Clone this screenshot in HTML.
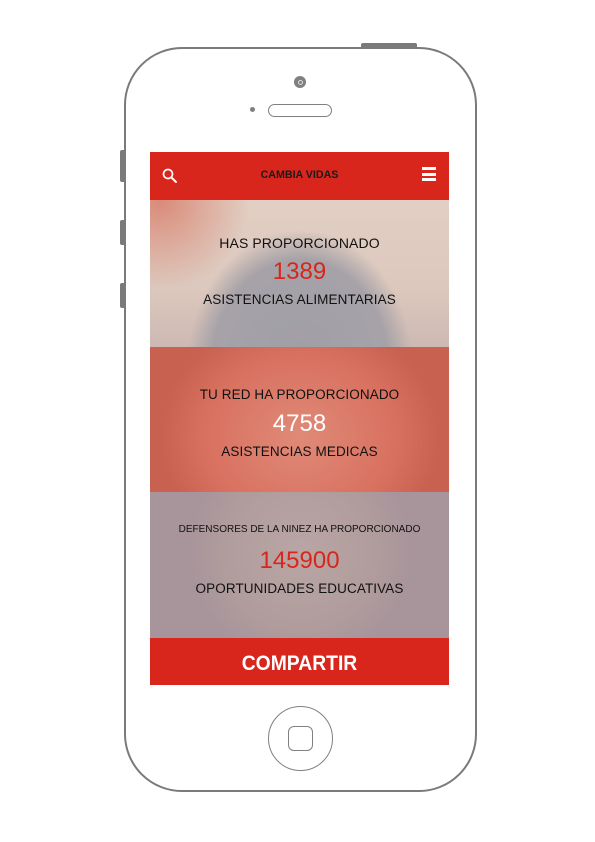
<!DOCTYPE html>
<html><head><meta charset="utf-8"><style>
*{margin:0;padding:0;box-sizing:border-box}
body{width:595px;height:842px;background:#fff;position:relative;overflow:hidden;font-family:"Liberation Sans",sans-serif}
.a{position:absolute}
.phone{left:124px;top:47px;width:353px;height:745px;border:2px solid #7a7a7a;border-radius:58px;background:#fff}
.side{background:#7a7a7a;border-radius:2px 0 0 2px;width:5px;left:120px}
.screen{left:150px;top:152px;width:299px;height:533px;overflow:hidden}
.hdr{left:0;top:0;width:299px;height:48px;background:#d9261c}
.hdr .t{position:absolute;left:0;right:0;top:17px;text-align:center;font-weight:bold;font-size:11px;color:#1a1a1a;transform:scaleX(0.97)}
.sec{left:0;width:299px;text-align:center;color:#111}
.s1{top:48px;height:147px;background:radial-gradient(ellipse 125px 150px at 150px 165px,#a09ea6 0%,#a6a2a8 70%,rgba(180,170,170,0) 90%),radial-gradient(ellipse 90px 90px at 10px 0px,#d98a78,rgba(220,200,190,0)),linear-gradient(180deg,#e2cfc4,#dcc8bd 60%,#cdb9b3)}
.s2{top:195px;height:145px;background:radial-gradient(ellipse 140px 120px at 150px 90px,#e08a78,#d8705f 70%,#c96150);}
.s3{top:340px;height:146px;background:radial-gradient(ellipse 110px 110px at 150px 60px,#b9a6a4,#b09c9c 70%,#a8959c)}
.sm{font-size:13.5px;line-height:16px;letter-spacing:.1px}
.num{font-size:24px;line-height:30px}
.btn{left:0;top:486px;width:299px;height:47px;background:#d9261c;color:#fff;text-align:center}
.btn span{display:block;font-weight:bold;font-size:21px;line-height:52px;transform:scaleX(0.92)}
</style></head><body>
<div class="a" style="left:361px;top:43px;width:56px;height:6px;background:#7a7a7a;border-radius:2px 2px 0 0"></div>
<div class="a side" style="top:150px;height:32px"></div>
<div class="a side" style="top:220px;height:25px"></div>
<div class="a side" style="top:283px;height:25px"></div>
<div class="a phone"></div>
<div class="a" style="left:294px;top:76px;width:12px;height:12px;border-radius:50%;background:#808080"></div>
<div class="a" style="left:297.5px;top:79.5px;width:5px;height:5px;border-radius:50%;border:1px solid #ddd"></div>
<div class="a" style="left:250px;top:107px;width:5px;height:5px;border-radius:50%;background:#808080"></div>
<div class="a" style="left:268px;top:104px;width:64px;height:13px;border-radius:7px;border:1.5px solid #808080"></div>
<div class="a" style="left:268px;top:706px;width:65px;height:65px;border-radius:50%;border:1.5px solid #808080"></div>
<div class="a" style="left:288px;top:726px;width:25px;height:25px;border-radius:6px;border:1.5px solid #808080"></div>
<div class="a screen">
 <div class="a hdr">
  <svg class="a" style="left:12px;top:16px" width="16" height="16" viewBox="0 0 16 16"><circle cx="6" cy="6" r="4.5" fill="none" stroke="#fff" stroke-width="1.7"/><line x1="9.3" y1="9.3" x2="14" y2="14" stroke="#fff" stroke-width="2" stroke-linecap="round"/></svg>
  <div class="t">CAMBIA VIDAS</div>
  <div class="a" style="left:272px;top:15px;width:14px;height:3px;background:#fff"></div>
  <div class="a" style="left:272px;top:20.5px;width:14px;height:3px;background:#fff"></div>
  <div class="a" style="left:272px;top:26px;width:14px;height:3px;background:#fff"></div>
 </div>
 <div class="a sec s1">
  <div class="sm" style="margin-top:35px;font-size:14px">HAS PROPORCIONADO</div>
  <div class="num" style="color:#d9261c;margin-top:6px">1389</div>
  <div class="sm" style="margin-top:5px">ASISTENCIAS ALIMENTARIAS</div>
 </div>
 <div class="a sec s2">
  <div class="sm" style="margin-top:40px">TU RED HA PROPORCIONADO</div>
  <div class="num" style="color:#fff;margin-top:6px">4758</div>
  <div class="sm" style="margin-top:5px">ASISTENCIAS MEDICAS</div>
 </div>
 <div class="a sec s3">
  <div style="font-size:10px;line-height:12px;margin-top:32px">DEFENSORES DE LA NINEZ HA PROPORCIONADO</div>
  <div class="num" style="color:#d9261c;margin-top:10px">145900</div>
  <div class="sm" style="margin-top:5px">OPORTUNIDADES EDUCATIVAS</div>
 </div>
 <div class="a btn"><span>COMPARTIR</span></div>
</div>
</body></html>
